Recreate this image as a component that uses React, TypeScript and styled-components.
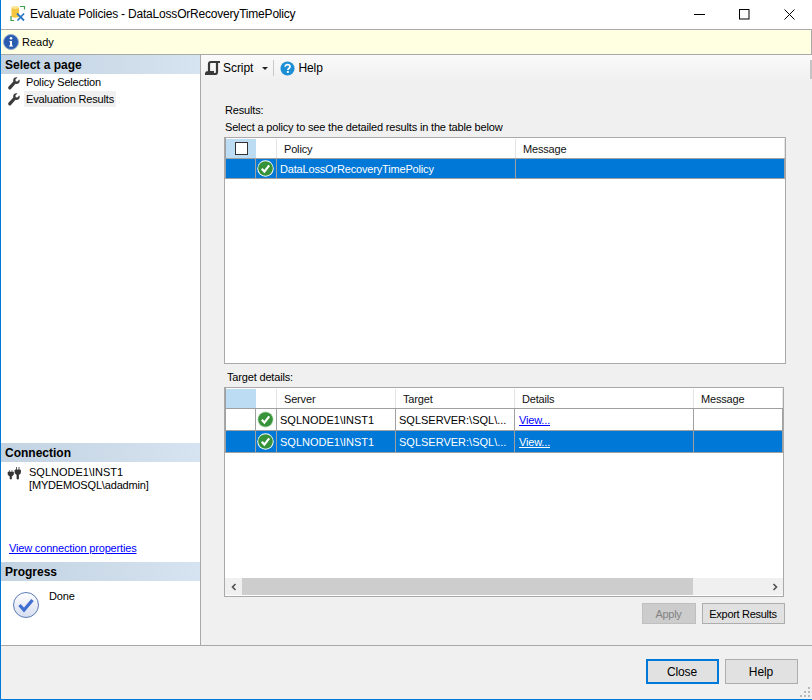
import React from "react";
import styled, { createGlobalStyle } from "styled-components";

const Global = createGlobalStyle`
  html, body { margin: 0; padding: 0; background: #fff; }
  body { font-family: "Liberation Sans", Arial, sans-serif; font-size: 11px; letter-spacing: -0.17px; color: #000; }
  * { box-sizing: border-box; }
`;

const Win = styled.div`
  width: 812px; height: 700px; display: flex; flex-direction: column;
  background: #f0f0f0; border-left: 1px solid #0078d7; border-bottom: 1px solid #0078d7; overflow: hidden; position: relative;
`;
const TitleBar = styled.div`
  height: 29px; flex: none; background: #fff; display: flex; align-items: center; padding-left: 9px;
`;
const TitleText = styled.div`
  font-size: 12px; letter-spacing: -0.2px; margin-left: 4px; flex: 1; white-space: nowrap; padding-bottom: 1px;
`;
const WinBtns = styled.div`
  display: flex; align-items: center;
`;
const WinBtn = styled.div`
  width: 45px; height: 29px; display: flex; align-items: center; justify-content: center;
`;
const Status = styled.div`
  height: 26px; flex: none; background: #ffffe1; border-top: 1px solid #a9a9a9; border-bottom: 1px solid #a9a9a9; border-right: 1px solid #a9a9a9;
  display: flex; align-items: center; gap: 3px; padding-left: 2px;
  letter-spacing: 0;
`;
const Main = styled.div`
  flex: 1; display: flex; min-height: 0;
`;
const Side = styled.div`
  width: 200px; flex: none; background: #fff; border-right: 1px solid #a9a9a9; display: flex; flex-direction: column;
`;
const SideHead = styled.div`
  height: 19px; flex: none; background: linear-gradient(90deg, #c3d3e2, #d6e3f0); font-weight: bold; font-size: 12px; letter-spacing: 0;
  display: flex; align-items: center; padding-left: 4px; padding-top: 1px;
`;
const Pages = styled.div`
  flex: 1; display: flex; flex-direction: column; padding-top: 1px; min-height: 0;
`;
const PageRow = styled.div`
  height: 16px; display: flex; align-items: center; padding-left: 7px; gap: 4px;
`;
const PageLabel = styled.span<{ $active?: boolean }>`
  display: block; padding: ${(p) => (p.$active ? "2px" : "1px")} 2px 0; height: 16px; white-space: nowrap; background: ${(p) => (p.$active ? "#f0f0f0" : "transparent")};
  ${(p) => (p.$active ? "width: 92px;" : "")}
`;
const ConnBody = styled.div`
  height: 100px; flex: none; display: flex; flex-direction: column; padding-top: 4px;
`;
const ConnRow = styled.div`
  display: flex; padding-left: 6px; gap: 8px; line-height: 13px; flex: 1;
`;
const Wide = styled.span`
  letter-spacing: 0;
`;
const Link = styled.a<{ $light?: boolean }>`
  color: ${(p) => (p.$light ? "#fff" : "#0000ff")}; text-decoration: underline;
`;
const ConnLink = styled.div`
  padding: 0 0 7px 8px; line-height: 13px;
`;
const ProgBody = styled.div`
  height: 64px; flex: none; display: flex; padding: 11px 0 0 12px; gap: 10px;
`;
const DoneText = styled.span`
  margin-top: -2px;
`;
const Right = styled.div`
  flex: 1; min-width: 0; display: flex; flex-direction: column; background: #f0f0f0;
`;
const Toolbar = styled.div`
  height: 26px; flex: none; display: flex; align-items: center; padding-left: 4px; font-size: 12px; letter-spacing: -0.05px;
  background: linear-gradient(#fafafa, #f0f0f0); position: relative;
  &::after { content: ""; position: absolute; right: 0; top: 5px; width: 2px; height: 19px; background: #c4c4c4; }
`;
const TbSpace = styled.div`
  height: 20px; flex: none; background: #f0f0f0;
`;
const ToolItem = styled.div`
  display: flex; align-items: center; gap: 3px;
`;
const Sep = styled.div`
  width: 1px; height: 16px; background: #c8c8c8; margin: 0 6px 0 5px;
`;
const Caret = styled.span`
  width: 0; height: 0; border: 3px solid transparent; border-top: 3px solid #222; border-bottom: 0; margin-left: 9px;
`;
const Body = styled.div`
  flex: 1; display: flex; flex-direction: column; padding: 0 0 0 23px; min-height: 0;
`;
const Label = styled.div<{ $indent?: number }>`
  height: 17px; display: flex; align-items: center; padding-left: ${(p) => p.$indent ?? 1}px; white-space: nowrap; flex: none;
`;
const TargetLabel = styled(Label)`
  margin-top: 4px;
`;
const GridBox = styled.div<{ $w: number; $h: number; $mt: number }>`
  width: ${(p) => p.$w}px; height: ${(p) => p.$h}px; margin-top: ${(p) => p.$mt}px; flex: none;
  background: #fff; border: 1px solid #a9a9a9; box-shadow: inset 0 1px 0 #a9a9a9;
  display: flex; flex-direction: column; overflow: hidden;
`;
const Row = styled.div<{ $cols: string; $h: number; $sel?: boolean }>`
  display: grid; grid-template-columns: ${(p) => p.$cols}; height: ${(p) => p.$h}px; flex: none;
  background: ${(p) => (p.$sel ? "#0078d7" : "#fff")}; color: ${(p) => (p.$sel ? "#fff" : "#000")};
  border-bottom: 1px solid #a0a0a0; border-left: 1px solid #a0a0a0;
`;
const HeadRow = styled(Row)`
  padding-top: 1px;
`;
const HeadCell = styled.div<{ $corner?: boolean }>`
  display: flex; align-items: center; padding-left: 7px; white-space: nowrap; color: #111;
  background: ${(p) => (p.$corner ? "#bcdcf4" : "#fff")}; border-right: 1px solid #e4e4e4;
  justify-content: ${(p) => (p.$corner ? "center" : "flex-start")};
  ${(p) => (p.$corner ? "padding-left: 0; border-right: 0;" : "")}
`;
const Cell = styled.div`
  display: flex; align-items: center; padding-left: 3px; white-space: nowrap; overflow: hidden; border-right: 1px solid #a0a0a0;
`;
const IconCell = styled(Cell)`
  padding-left: 0; padding-right: 1px; justify-content: center;
`;
const LinkCell = styled(Cell)`
  padding-left: 4px;
`;
const CheckBox = styled.div`
  width: 13px; height: 13px; border: 1px solid #333; background: #fff;
`;
const Fill = styled.div`
  flex: 1; min-height: 0; background: #fff;
`;
const HScroll = styled.div`
  height: 17px; flex: none; display: flex; align-items: stretch; background: #f0f0f0; margin-bottom: 1px;
`;
const Arrow = styled.div`
  width: 17px; flex: none; display: flex; align-items: center; justify-content: center;
`;
const Track = styled.div`
  flex: 1; display: flex;
`;
const Thumb = styled.div`
  width: 451px; background: #cdcdcd;
`;
const BtnRow = styled.div`
  display: flex; width: 561px; justify-content: flex-end; gap: 6px; margin-top: 6px; flex: none;
`;
const Btn = styled.div<{ $w: number; $h: number; $disabled?: boolean; $focus?: boolean }>`
  width: ${(p) => p.$w}px; height: ${(p) => p.$h}px; display: flex; align-items: center; justify-content: center; padding-right: 1px;
  background: ${(p) => (p.$disabled ? "#cccccc" : "#e1e1e1")}; color: ${(p) => (p.$disabled ? "#838383" : "#000")};
  border: ${(p) => (p.$focus ? "2px solid #0078d7" : p.$disabled ? "1px solid #bfbfbf" : "1px solid #adadad")};
  font-size: ${(p) => (p.$h > 22 ? "12px" : "11px")}; letter-spacing: ${(p) => (p.$h > 22 ? "-0.1px" : "-0.3px")};
`;
const Footer = styled.div`
  height: 54px; flex: none; border-top: 1px solid #a9a9a9; background: #f0f0f0; display: flex; justify-content: flex-end; align-items: flex-start;
  gap: 6px; padding: 13px 14px 0 0; position: relative;
`;
const Grip = styled.svg`
  position: absolute; right: 1px; bottom: 1px;
`;
const SideIcon = styled.svg`
  flex: none;
`;

const Wrench = () => (
  <SideIcon width="12" height="13" viewBox="0 0 13 13" preserveAspectRatio="none">
    <path d="M12.400 2.400 10 4.600 8.400 4.200 8 2.600 10.200.400C8.400-.200 6.400.600 5.800 2.200c-.300.800-.300 1.500 0 2.200L.700 9.400c-.700.700-.700 1.800 0 2.500.700.700 1.800.700 2.500 0l5-5.200c1.700.600 3.500-.100 4.300-1.700.300-.800.300-1.800-.100-2.600Z" fill="#3c3c3c" />
  </SideIcon>
);
const GreenCheck = ({ sel }: { sel?: boolean }) => (
  <svg width="17" height="17" viewBox="0 0 17 17">
    <circle cx="8.500" cy="8.500" r="8.200" fill={sel ? "#fff" : "#d5ead5"} />
    <circle cx="8.500" cy="8.500" r="7.300" fill="#37933a" />
    <path d="M4.800 8.800 7.400 11.600 12.200 5.400" fill="none" stroke="#fff" strokeWidth="2.200" />
  </svg>
);
const AppIcon = () => (
  <SideIcon width="16" height="17" viewBox="0 0 16 17">
    <path d="M1.500 1.500C1.500 0 9 0 9 1.500V10.500C9 12 1.500 12 1.500 10.500Z" fill="#f4c53f" />
    <ellipse cx="5.250" cy="1.500" rx="3.750" ry="1.400" fill="#fce79c" />
    <path d="M10 .500H14.500V3.500" fill="none" stroke="#3f9d4b" strokeWidth="1.200" />
    <path d="M1 10V14.500H4" fill="none" stroke="#3f9d4b" strokeWidth="1.200" />
    <path d="M7 7.500 14 14.500M14 7.500 7.500 14.500" stroke="#2d78c4" strokeWidth="1.800" />
  </SideIcon>
);

const cols1 = "30px 21px 239px 1fr";
const cols2 = "30px 21px 119px 119px 179px 1fr";

export default function App() {
  return (
    <Win>
      <Global />
      <TitleBar>
        <AppIcon />
        <TitleText>Evaluate Policies - DataLossOrRecoveryTimePolicy</TitleText>
        <WinBtns>
          <WinBtn>
            <svg width="11" height="11" viewBox="0 0 11 11"><path d="M0 5.500H11" stroke="#000" /></svg>
          </WinBtn>
          <WinBtn>
            <svg width="11" height="11" viewBox="0 0 11 11"><rect x=".5" y=".5" width="9.500" height="9.500" fill="none" stroke="#000" /></svg>
          </WinBtn>
          <WinBtn>
            <svg width="11" height="11" viewBox="0 0 11 11"><path d="M.5.500 10.500 10.500M10.500.500.500 10.500" stroke="#000" /></svg>
          </WinBtn>
        </WinBtns>
      </TitleBar>
      <Status>
        <svg width="16" height="16" viewBox="0 0 16 16">
          <circle cx="8" cy="8" r="7.500" fill="#2a5db0" stroke="#8fa8d0" />
          <circle cx="8" cy="4.300" r="1.300" fill="#fff" />
          <path d="M6.500 7H9V11.500H10V12.500H6V11.500H7V8H6.500Z" fill="#fff" />
        </svg>
        <span>Ready</span>
      </Status>
      <Main>
        <Side>
          <SideHead>Select a page</SideHead>
          <Pages>
            <PageRow><Wrench /><PageLabel>Policy Selection</PageLabel></PageRow>
            <PageRow><Wrench /><PageLabel $active>Evaluation Results</PageLabel></PageRow>
          </Pages>
          <SideHead>Connection</SideHead>
          <ConnBody>
            <ConnRow>
              <SideIcon width="14" height="14" viewBox="0 -1 14 14">
                <path d="M2.500 3v2M5 3v2M1 5H6.500V7C6.500 8.500 5 9 4.600 9V12H3V9C2.500 9 1 8.500 1 7Z" fill="#333" stroke="#333" strokeWidth=".6" />
                <path d="M9.500 0v3M12 0v3M8 3h5.500V5.500C13.500 7 12 7.500 11.500 7.500V12H10V7.500C9.500 7.500 8 7 8 5.500Z" fill="#333" stroke="#333" strokeWidth=".8" />
              </SideIcon>
              <div><Wide>SQLNODE1\INST1</Wide><br />[MYDEMOSQL\adadmin]</div>
            </ConnRow>
            <ConnLink><Link>View connection properties</Link></ConnLink>
          </ConnBody>
          <SideHead>Progress</SideHead>
          <ProgBody>
            <SideIcon width="26" height="26" viewBox="0 0 26 26">
              <defs>
                <linearGradient id="dn" x1="0" y1="0" x2="0" y2="1">
                  <stop offset="0" stopColor="#ffffff" />
                  <stop offset="1" stopColor="#d5ddef" />
                </linearGradient>
              </defs>
              <circle cx="13" cy="13" r="12.500" fill="url(#dn)" stroke="#5d7cb5" />
              <path d="M6.500 13 11 18 19.500 8" fill="none" stroke="#3f6fd0" strokeWidth="3.200" />
            </SideIcon>
            <DoneText>Done</DoneText>
          </ProgBody>
        </Side>
        <Right>
          <Toolbar>
            <ToolItem>
              <svg width="15" height="16" viewBox="0 0 15 16">
                <path d="M15 2H6C4.800 2 4 2.800 4 4V11.500M12 2.500V12C12 13.500 11.200 14 10 14H1C1 13 1.500 12 3 12H9" fill="none" stroke="#3a3a3a" strokeWidth="2.200" />
              </svg>
              <span>Script</span>
            </ToolItem>
            <Caret />
            <Sep />
            <ToolItem>
              <svg width="15" height="15" viewBox="0 0 16 16">
                <circle cx="8" cy="8" r="7.500" fill="#1e8fd5" />
                <path d="M5.500 6C5.500 4.500 6.700 3.800 8 3.800 9.500 3.800 10.700 4.600 10.700 6 10.700 7.700 8.400 7.700 8.400 9.500" fill="none" stroke="#fff" strokeWidth="1.800" />
                <rect x="7.400" y="10.700" width="2" height="2" fill="#fff" />
              </svg>
              <span>Help</span>
            </ToolItem>
          </Toolbar>
          <TbSpace />
          <Body>
            <Label>Results:</Label>
            <Label>Select a policy to see the detailed results in the table below</Label>
            <GridBox $w={562} $h={227} $mt={2}>
              <HeadRow $cols={cols1} $h={21}>
                <HeadCell $corner><CheckBox /></HeadCell>
                <HeadCell />
                <HeadCell>Policy</HeadCell>
                <HeadCell>Message</HeadCell>
              </HeadRow>
              <Row $cols={cols1} $h={20} $sel>
                <Cell />
                <IconCell><GreenCheck sel /></IconCell>
                <Cell>DataLossOrRecoveryTimePolicy</Cell>
                <Cell />
              </Row>
              <Fill />
            </GridBox>
            <TargetLabel $indent={3}>Target details:</TargetLabel>
            <GridBox $w={560} $h={210} $mt={2}>
              <HeadRow $cols={cols2} $h={21}>
                <HeadCell $corner />
                <HeadCell />
                <HeadCell>Server</HeadCell>
                <HeadCell>Target</HeadCell>
                <HeadCell>Details</HeadCell>
                <HeadCell>Message</HeadCell>
              </HeadRow>
              <Row $cols={cols2} $h={22}>
                <Cell />
                <IconCell><GreenCheck /></IconCell>
                <Cell><Wide>SQLNODE1\INST1</Wide></Cell>
                <Cell><Wide>SQLSERVER:\SQL\...</Wide></Cell>
                <LinkCell><Link>View...</Link></LinkCell>
                <Cell />
              </Row>
              <Row $cols={cols2} $h={22} $sel>
                <Cell />
                <IconCell><GreenCheck sel /></IconCell>
                <Cell><Wide>SQLNODE1\INST1</Wide></Cell>
                <Cell><Wide>SQLSERVER:\SQL\...</Wide></Cell>
                <LinkCell><Link $light>View...</Link></LinkCell>
                <Cell />
              </Row>
              <Fill />
              <HScroll>
                <Arrow>
                  <svg width="8" height="8" viewBox="0 0 8 8"><path d="M5.500 1 2.500 4 5.500 7" fill="none" stroke="#505050" strokeWidth="1.600" /></svg>
                </Arrow>
                <Track><Thumb /></Track>
                <Arrow>
                  <svg width="8" height="8" viewBox="0 0 8 8"><path d="M2.500 1 5.500 4 2.500 7" fill="none" stroke="#505050" strokeWidth="1.600" /></svg>
                </Arrow>
              </HScroll>
            </GridBox>
            <BtnRow>
              <Btn $w={54} $h={21} $disabled>Apply</Btn>
              <Btn $w={83} $h={21}>Export Results</Btn>
            </BtnRow>
          </Body>
        </Right>
      </Main>
      <Footer>
        <Btn $w={73} $h={25} $focus>Close</Btn>
        <Btn $w={73} $h={25}>Help</Btn>
        <Grip width="12" height="12" viewBox="0 0 12 12">
          <path d="M9 1h2v2H9zM5 5h2v2H5zM9 5h2v2H9zM1 9h2v2H1zM5 9h2v2H5zM9 9h2v2H9z" fill="#b8b8b8" />
        </Grip>
      </Footer>
    </Win>
  );
}
